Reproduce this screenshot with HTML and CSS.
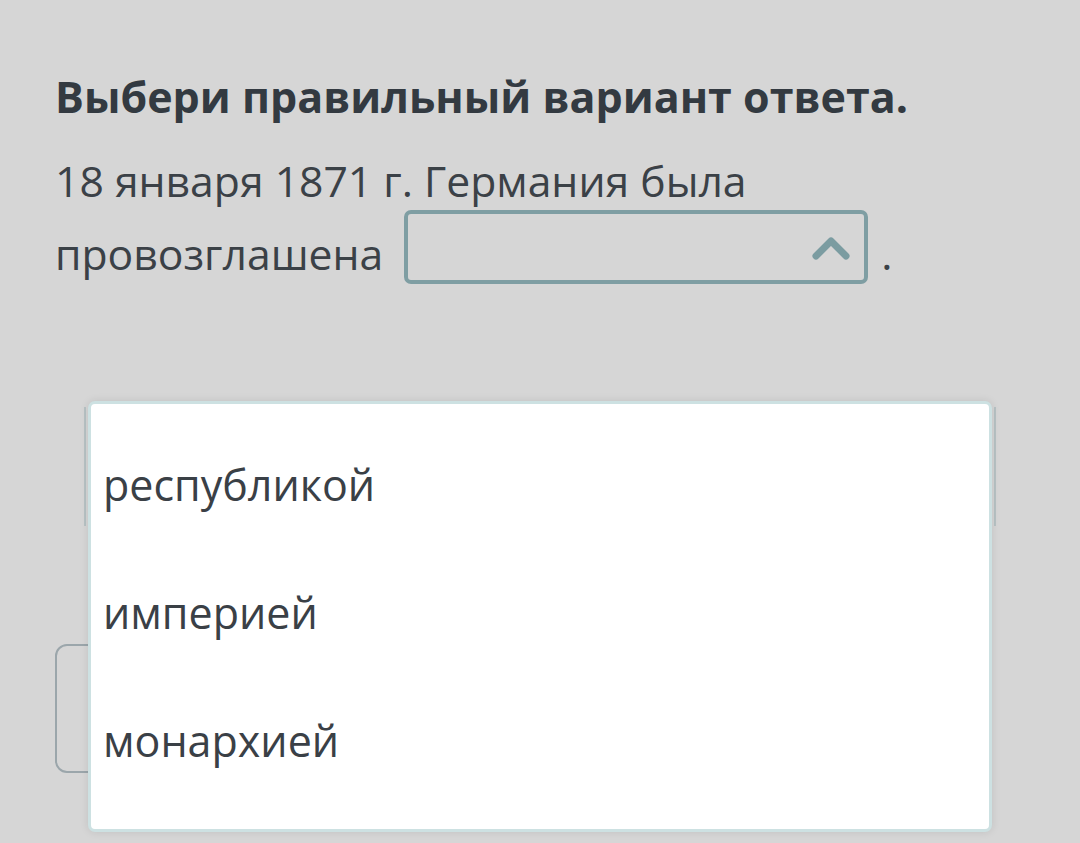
FILE: index.html
```html
<!DOCTYPE html>
<html lang="ru">
<head>
<meta charset="utf-8">
<title>Вопрос</title>
<link rel="stylesheet" href="styles.css">
</head>
<body>
<div class="page">
  <main class="question">
    <h1 class="title">Выбери правильный вариант ответа.</h1>
    <p class="text">18 января 1871 г. Германия была<br>провозглашена<span class="select"><svg class="chevron" width="40" height="28" viewBox="0 0 40 28"><polyline points="5,22 20,7 35,22" fill="none" stroke="#7b9ca1" stroke-width="7" stroke-linecap="round" stroke-linejoin="round"/></svg></span><span class="dot">.</span></p>
    <div class="blank"></div>
    <div class="button"></div>
  </main>
  <ul class="popup">
    <li class="option">республикой</li>
    <li class="option">империей</li>
    <li class="option">монархией</li>
  </ul>
</div>
</body>
</html>
```

FILE: styles.css
```css
html, body {
  margin: 0;
  padding: 0;
  background: #d6d6d6;
}
.page {
  position: relative;
  width: 1080px;
  height: 843px;
  overflow: hidden;
  font-family: "Open Sans", "Noto Sans", sans-serif;
}
.question {
  padding: 0 55px;
}
.title {
  margin: 71px 0 0;
  font-size: 43px;
  line-height: 52px;
  font-weight: 700;
  color: #333a41;
}
.text {
  margin: 21px 0 0;
  font-size: 42.7px;
  line-height: 73px;
  font-weight: 400;
  color: #3b4147;
}
.select {
  display: inline-block;
  box-sizing: border-box;
  width: 464px;
  height: 74px;
  margin: -10px 0 -10px 21px;
  vertical-align: -4px;
  border: 4px solid #7f9ea3;
  border-radius: 7px;
  position: relative;
}
.chevron {
  position: absolute;
  right: 13px;
  top: 20px;
}
.dot {
  margin-left: 13px;
}
.blank {
  margin: 117px 0 0 29px;
  width: 912px;
  height: 119px;
  box-sizing: border-box;
  border-left: 2px solid #b7c2c4;
  border-right: 2px solid #b7c2c4;
}
.button {
  margin-top: 118px;
  width: 420px;
  height: 129px;
  box-sizing: border-box;
  border: 2px solid #9ba6ab;
  border-radius: 12px;
}
.popup {
  position: absolute;
  left: 88px;
  top: 401px;
  width: 904px;
  box-sizing: border-box;
  margin: 0;
  padding: 17px 0 24px;
  list-style: none;
  background: #ffffff;
  border: 3px solid #cde1e2;
  border-radius: 7px;
  box-shadow: 0 0 8px rgba(0, 0, 0, 0.10);
}
.option {
  height: 128px;
  line-height: 128px;
  padding-left: 12px;
  font-size: 43px;
  color: #3a4046;
}
```
